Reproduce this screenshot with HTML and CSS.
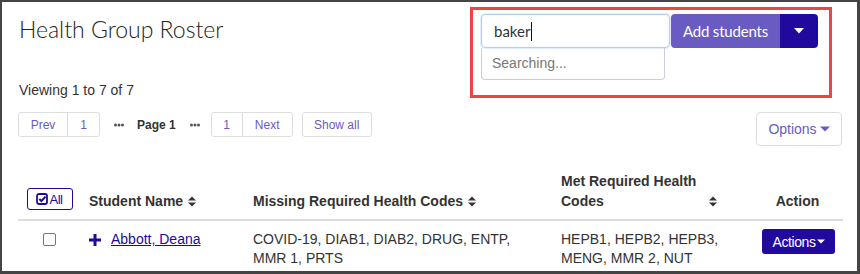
FILE: index.html
```html
<!DOCTYPE html>
<html lang="en">
<head>
<meta charset="utf-8">
<title>Health Group Roster</title>
<link rel="stylesheet" href="styles.css">
</head>
<body>
<div class="frame">
  <div class="top">
    <div class="intro">
      <h1 class="title">Health Group Roster</h1>
      <p class="viewing">Viewing 1 to 7 of 7</p>
    </div>
    <div class="highlight">
      <div class="search-group">
        <div class="search-col">
          <div class="search-input"><span class="typed">baker</span><span class="caret"></span></div>
          <div class="search-results">Searching...</div>
        </div>
        <button class="btn-add">Add students</button>
        <button class="btn-split"><svg width="10" height="6" viewBox="0 0 10 6"><polygon points="0,0 10,0 5,5.5" fill="#fff"/></svg></button>
      </div>
    </div>
  </div>

  <div class="toolbar">
    <div class="pager">
      <div class="pgroup"><span class="pbtn pprev">Prev</span><span class="pbtn pnum">1</span></div>
      <svg class="dots" width="10" height="4" viewBox="0 0 10 4"><circle cx="1.5" cy="2" r="1.5" fill="#555"/><circle cx="5" cy="2" r="1.5" fill="#555"/><circle cx="8.5" cy="2" r="1.5" fill="#555"/></svg>
      <span class="pcurrent">Page 1</span>
      <svg class="dots" width="10" height="4" viewBox="0 0 10 4"><circle cx="1.5" cy="2" r="1.5" fill="#555"/><circle cx="5" cy="2" r="1.5" fill="#555"/><circle cx="8.5" cy="2" r="1.5" fill="#555"/></svg>
      <div class="pgroup pgroup2"><span class="pbtn pnum">1</span><span class="pbtn pnext">Next</span></div>
      <span class="pbtn pshow">Show all</span>
    </div>
    <button class="btn-options">Options <svg width="10" height="6" viewBox="0 0 10 6"><polygon points="0,0.5 10,0.5 5,5.5" fill="#6a5bc2"/></svg></button>
  </div>

  <div class="roster">
    <div class="th th-check"><button class="btn-all"><svg width="12" height="12" viewBox="0 0 12 12"><rect x="1" y="1" width="10" height="10" rx="2" fill="none" stroke="#22099e" stroke-width="1.8"/><path d="M3.3 6 L5.4 8 L9.6 3.6" fill="none" stroke="#22099e" stroke-width="2"/></svg>All</button></div>
    <div class="th th-name">Student Name <svg class="sort" width="8" height="11" viewBox="0 0 8 11"><polygon points="0,4.5 4,0.5 8,4.5" fill="#333"/><polygon points="0,6.5 4,10.5 8,6.5" fill="#333"/></svg></div>
    <div class="th th-missing">Missing Required Health Codes <svg class="sort" width="8" height="11" viewBox="0 0 8 11"><polygon points="0,4.5 4,0.5 8,4.5" fill="#333"/><polygon points="0,6.5 4,10.5 8,6.5" fill="#333"/></svg></div>
    <div class="th th-met"><span class="met-label">Met Required Health Codes</span><svg class="sort" width="8" height="11" viewBox="0 0 8 11"><polygon points="0,4.5 4,0.5 8,4.5" fill="#333"/><polygon points="0,6.5 4,10.5 8,6.5" fill="#333"/></svg></div>
    <div class="th th-action">Action</div>

    <div class="td td-check"><span class="checkbox"></span></div>
    <div class="td td-name"><svg class="plus" width="12" height="12" viewBox="0 0 12 12"><rect x="0" y="4.5" width="12" height="3" fill="#22099e"/><rect x="4.5" y="0" width="3" height="12" fill="#22099e"/></svg><a class="student-link" href="#">Abbott, Deana</a></div>
    <div class="td td-missing"><span class="codes-missing">COVID-19, DIAB1, DIAB2, DRUG, ENTP, MMR 1, PRTS</span></div>
    <div class="td td-met"><span class="codes-met">HEPB1, HEPB2, HEPB3, MENG, MMR 2, NUT</span></div>
    <div class="td td-action"><button class="btn-actions">Actions<svg width="8" height="5" viewBox="0 0 8 5"><polygon points="0,0.5 8,0.5 4,4.5" fill="#fff"/></svg></button></div>
  </div>
</div>
</body>
</html>
```

FILE: styles.css
```css
* { box-sizing: border-box; }
html, body { margin: 0; padding: 0; background: #fff; }
body { font-family: "Liberation Sans", Arial, sans-serif; color: #333; font-size: 14px; }

.frame {
  width: 860px;
  height: 274px;
  overflow: hidden;
  border: 2px solid #444;
  border-right-width: 3px;
  border-bottom-width: 3px;
  padding: 0 14px 0 16px;
}

.top { display: flex; justify-content: space-between; align-items: flex-start; padding-top: 5px; }
.intro { padding-left: 1px; }
.title {
  margin: 8px 0 0;
  font-family: Lato, "Open Sans", sans-serif;
  font-weight: 300;
  font-size: 23px;
  line-height: 28px;
  color: #222;
}
.viewing { margin: 37px 0 0; font-size: 14px; line-height: 20px; color: #333; }

.highlight {
  width: 362px;
  height: 91px;
  margin-right: 11px;
  border: 3px solid #ef4444;
  padding: 4px 11px 0 8px;
}
.search-group { display: flex; align-items: flex-start; }
.search-col { display: flex; flex-direction: column; }
.search-input {
  width: 189px;
  height: 34px;
  border: 1px solid #b7cfeb;
  border-radius: 4px;
  box-shadow: 0 0 0 1px #e3eefa, inset 0 0 2px #d6e6f7;
  padding-left: 12px;
  display: flex;
  align-items: center;
  font-family: Lato, "Open Sans", sans-serif;
  font-size: 15px;
  color: #333;
}
.caret { display: inline-block; width: 1px; height: 19px; background: #111; margin-left: 1px; }
.search-results {
  width: 184px;
  height: 32px;
  border: 1px solid #ccd;
  border-top: none;
  border-radius: 0 0 4px 4px;
  padding-left: 10px;
  font-size: 14px;
  line-height: 30px;
  color: #777;
}
.btn-add {
  margin-left: 1px;
  width: 109px;
  height: 34px;
  border: none;
  border-radius: 4px 0 0 4px;
  background: #6a5bc2;
  color: #fff;
  font-family: Lato, "Open Sans", sans-serif;
  font-size: 15px;
  letter-spacing: -0.2px;
  padding: 0;
}
.btn-split {
  width: 38px;
  height: 34px;
  border: none;
  border-radius: 0 4px 4px 0;
  background: #22099e;
  display: flex;
  align-items: center;
  justify-content: center;
  padding: 0;
}

.toolbar { display: flex; justify-content: space-between; align-items: flex-start; margin-top: 12px; }
.pager { display: flex; align-items: center; }
.pgroup { display: flex; border: 1px solid #ddd; border-radius: 3px; height: 25px; }
.pbtn { display: flex; align-items: center; justify-content: center; color: #6a5bc2; font-size: 12px; height: 23px; }
.pprev { width: 49px; border-right: 1px solid #ddd; }
.pnum { width: 31px; }
.pgroup .pnum:first-child { border-right: 1px solid #ddd; }
.pnext { width: 49px; }
.dots { margin: 0 0 0 14px; }
.pcurrent { font-weight: bold; font-size: 12px; color: #333; margin-left: 13px; }
.pgroup2 { margin-left: 11px; }
.pshow { width: 70px; height: 25px; margin-left: 9px; border: 1px solid #ddd; border-radius: 3px; }

.btn-options {
  margin-right: 1px;
  width: 86px;
  height: 34px;
  border: 1px solid #ddd;
  border-radius: 4px;
  background: #fff;
  color: #6a5bc2;
  font-family: "Liberation Sans", Arial, sans-serif;
  font-size: 14px;
  padding: 0;
  display: flex;
  align-items: center;
  justify-content: center;
  gap: 3px;
}

.roster {
  display: grid;
  grid-template-columns: 63px 164px 308px 199px 91px;
  margin-top: 25px;
}
.th {
  font-weight: bold;
  font-size: 14px;
  line-height: 20px;
  color: #333;
  display: flex;
  align-items: flex-end;
  padding: 0 0 8px 8px;
  border-bottom: 2px solid #ddd;
}
.th-check { justify-content: center; padding: 0 0 9px 0; }
.th-action { justify-content: center; padding-left: 0; }
.sort { margin-left: 5px; margin-bottom: 4px; flex: none; }
.th-met .met-label { width: 148px; }
.th-met .sort { margin-left: 0; }

.btn-all {
  display: flex;
  align-items: center;
  gap: 2px;
  width: 46px;
  height: 22px;
  border: 1px solid #22099e;
  border-radius: 3px;
  background: #fff;
  color: #22099e;
  font-family: "Liberation Sans", Arial, sans-serif;
  font-size: 13px;
  padding: 0 0 0 8px;
  letter-spacing: -0.5px;
}

.td { padding: 9px 0 0 8px; line-height: 19px; font-size: 14px; color: #333; }
.td-check { display: flex; justify-content: center; padding: 12px 0 0 0; }
.checkbox { width: 13px; height: 13px; border: 1px solid #767676; border-radius: 2px; background: #fff; }
.td-name { display: flex; align-items: flex-start; }
.plus { margin: 4px 10px 0 0; flex: none; }
.student-link { color: #22099e; text-decoration: underline; }
.codes-missing { display: block; max-width: 275px; }
.codes-met { display: block; max-width: 170px; }
.td-action { display: flex; justify-content: center; padding: 8px 0 0 2px; }
.btn-actions {
  width: 73px;
  height: 25px;
  border: none;
  border-radius: 3px;
  background: #22099e;
  color: #fff;
  font-family: "Liberation Sans", Arial, sans-serif;
  font-size: 14px;
  letter-spacing: -0.4px;
  padding: 0;
  display: flex;
  align-items: center;
  justify-content: center;
  gap: 1px;
}
```
